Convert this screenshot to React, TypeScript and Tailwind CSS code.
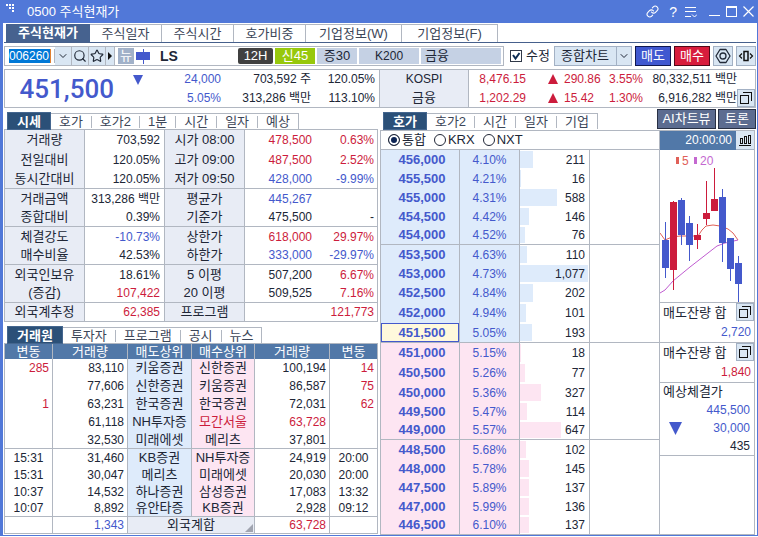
import clsx from 'clsx'
import { ChevronDown, Link, Search, Star } from 'lucide-react'
import React from 'react'

type Tone = 'up' | 'down' | 'flat'

const toneClass: Record<Tone, string> = {
  up: 'text-[#cc1c3c]',
  down: 'text-[#4459cc]',
  flat: 'text-[#202636]',
}

const mainTabs = ['주식일자', '주식시간', '호가비중', '기업정보(W)', '기업정보(F)']

type QuoteRow = {
  label: string
  value: string
  tone?: Tone
  label2: string
  value2: string
  rate?: string
  tone2: Tone
  rateTone?: Tone
  last?: boolean
  tall?: boolean
}

const quoteRows: QuoteRow[] = [
  { label: '거래량', value: '703,592', label2: '시가 08:00', value2: '478,500', rate: '0.63%', tone2: 'up', tall: true },
  { label: '전일대비', value: '120.05%', label2: '고가 09:00', value2: '487,500', rate: '2.52%', tone2: 'up' },
  { label: '동시간대비', value: '120.05%', label2: '저가 09:50', value2: '428,000', rate: '-9.99%', tone2: 'down', last: true, tall: true },
  { label: '거래금액', value: '313,286 백만', label2: '평균가', value2: '445,267', tone2: 'down' },
  { label: '종합대비', value: '0.39%', label2: '기준가', value2: '475,500', rate: '-', tone2: 'flat', last: true },
  { label: '체결강도', value: '-10.73%', tone: 'down', label2: '상한가', value2: '618,000', rate: '29.97%', tone2: 'up' },
  { label: '매수비율', value: '42.53%', label2: '하한가', value2: '333,000', rate: '-29.97%', tone2: 'down', last: true },
  { label: '외국인보유', value: '18.61%', label2: '5 이평', value2: '507,200', rate: '6.67%', tone2: 'flat', rateTone: 'up' },
  { label: '(증감)', value: '107,422', tone: 'up', label2: '20 이평', value2: '509,525', rate: '7.16%', tone2: 'flat', rateTone: 'up', last: true },
  { label: '외국계추정', value: '62,385', tone: 'up', label2: '프로그램', value2: '', rate: '121,773', tone2: 'up', last: true },
]

const topBrokers = [
  ['285', '83,110', '키움증권', '신한증권', '100,194', '14'],
  ['', '77,606', '신한증권', '키움증권', '86,587', '75'],
  ['1', '63,231', '한국증권', '한국증권', '72,031', '62'],
  ['', '61,118', 'NH투자증', '모간서울', '63,728', ''],
  ['', '32,530', '미래에셋', '메리츠', '37,801', ''],
]

const otherBrokers = [
  ['15:31', '31,460', 'KB증권', 'NH투자증', '24,919', '20:00'],
  ['15:31', '30,047', '메리츠', '미래에셋', '20,030', '20:00'],
  ['10:37', '14,532', '하나증권', '삼성증권', '17,083', '13:32'],
  ['10:07', '8,892', '유안타증', 'KB증권', '2,928', '09:12'],
]

type Level = { price: string; rate: string; qty: number; tall?: boolean }

const levels: Level[] = [
  { price: '456,000', rate: '4.10%', qty: 211 },
  { price: '455,500', rate: '4.21%', qty: 16 },
  { price: '455,000', rate: '4.31%', qty: 588 },
  { price: '454,500', rate: '4.42%', qty: 146 },
  { price: '454,000', rate: '4.52%', qty: 76 },
  { price: '453,500', rate: '4.63%', qty: 110 },
  { price: '453,000', rate: '4.73%', qty: 1077 },
  { price: '452,500', rate: '4.84%', qty: 202, tall: true },
  { price: '452,000', rate: '4.94%', qty: 101, tall: true },
  { price: '451,500', rate: '5.05%', qty: 193, tall: true },
  { price: '451,000', rate: '5.15%', qty: 18, tall: true },
  { price: '450,500', rate: '5.26%', qty: 77, tall: true },
  { price: '450,000', rate: '5.36%', qty: 327 },
  { price: '449,500', rate: '5.47%', qty: 114 },
  { price: '449,000', rate: '5.57%', qty: 647 },
  { price: '448,500', rate: '5.68%', qty: 102 },
  { price: '448,000', rate: '5.78%', qty: 145 },
  { price: '447,500', rate: '5.89%', qty: 137 },
  { price: '447,000', rate: '5.99%', qty: 136 },
  { price: '446,500', rate: '6.10%', qty: 137 },
]

// x, body top, body bottom, wick top, wick bottom, rising
const candles: [number, number, number, number, number, boolean][] = [
  [2, 90, 118, 72, 128, false],
  [10, 52, 120, 51, 140, true],
  [18, 50, 85, 48, 95, false],
  [26, 73, 95, 66, 111, false],
  [34, 85, 90, 74, 99, true],
  [43, 63, 69, 31, 75, true],
  [51, 49, 61, 18, 61, true],
  [59, 47, 93, 39, 112, false],
  [67, 88, 119, 88, 131, false],
  [75, 113, 134, 106, 152, false],
]

function Triangle({ up, className }: { up?: boolean; className?: string }) {
  return (
    <svg viewBox="0 0 10 10" className={className} fill="currentColor" aria-hidden="true">
      <path d={up ? 'M5 0L10 10H0Z' : 'M0 0H10L5 10Z'} />
    </svg>
  )
}

function PopupButton({ label }: { label: string }) {
  return (
    <button
      type="button"
      aria-label={label}
      className="flex size-[18px] shrink-0 items-center justify-center border border-[#a3b1c4] bg-[#d9e6f3]"
    >
      <svg viewBox="0 0 14 14" className="size-3.5 shrink-0" fill="none" stroke="#111" shapeRendering="crispEdges">
        <path d="M1.5 4.5h8v8h-8z" />
        <path d="M4 1.5h8.500V10" />
      </svg>
    </button>
  )
}

function SubTabs({ active, tabs }: { active: string; tabs: string[] }) {
  return (
    <nav className="flex h-[17px] pl-[3px]">
      <button
        type="button"
        className="-mb-px shrink-0 border border-[#44668f] bg-[#2b5078] px-[9px] leading-[15px] font-bold text-white"
      >
        {active}
      </button>
      <div className="mt-px flex items-center border-t border-r border-[#b1b7c1]">
        {tabs.map((tab, i) => (
          <React.Fragment key={tab}>
            {i > 0 && <span className="h-3 w-px bg-[#b1b7c1]" />}
            <button type="button" className="px-2 leading-[15px] whitespace-nowrap text-[#3c4658]">
              {tab}
            </button>
          </React.Fragment>
        ))}
      </div>
    </nav>
  )
}

function TitleBar() {
  return (
    <header className="flex h-[23px] items-center bg-[#5178d8] pr-[3px] pl-[3px] text-white">
      <svg viewBox="0 0 9 9" className="mb-1.5 size-[9px]" fill="#fff" shapeRendering="crispEdges" aria-hidden="true">
        <path d="M0 0h2v2H0zM3 0h2v2H3zM6 0h2v2H6zM3 3h2v2H3zM6 3h2v2H6zM6 6h2v2H6z" />
      </svg>
      <h1 className="ml-3 flex-1">0500 주식현재가</h1>
      <div className="flex items-center">
        <button type="button" aria-label="연결" className="mr-2.5">
          <Link className="size-[13px]" strokeWidth={2} />
        </button>
        <button type="button" aria-label="도움말" className="mr-2 text-sm leading-none">
          ?
        </button>
        <button type="button" aria-label="메뉴" className="mr-3">
          <svg viewBox="0 0 12 12" className="size-3" fill="none" stroke="#fff" shapeRendering="crispEdges">
            <path d="M0 1.5h11M0 5.5h11M0 10.5h6" />
            <path d="M7 8.500l2.500 2.500L12 8.500" shapeRendering="auto" />
          </svg>
        </button>
        <button type="button" aria-label="최소화" className="mr-1.5">
          <svg viewBox="0 0 11 12" className="h-3 w-[11px]" fill="#fff" shapeRendering="crispEdges">
            <path d="M0 9h11v1H0z" />
          </svg>
        </button>
        <button type="button" aria-label="최대화" className="mr-1.5">
          <svg viewBox="0 0 11 12" className="h-3 w-[11px]" fill="none" stroke="#fff" shapeRendering="crispEdges">
            <path d="M.5 .5h10v10H.5zM0 1.5h11" />
          </svg>
        </button>
        <button type="button" aria-label="닫기">
          <svg viewBox="0 0 11 12" className="h-3 w-[11px]" fill="none" stroke="#fff" strokeWidth="1.200">
            <path d="M.5 .5l10 10M10.500 .5l-10 10" />
          </svg>
        </button>
      </div>
    </header>
  )
}

function Toolbar() {
  const iconButton = 'flex h-full shrink-0 items-center justify-center border-r border-[#b1b7c1] bg-[#d9e6f3] text-[#222a38]'
  return (
    <div className="mt-[3px] flex h-5 items-stretch">
      <div className="flex min-w-0 flex-[501] items-center border border-[#b1b7c1]">
        <div className="w-[50px] shrink-0 border-r border-[#b1b7c1] pl-1">
          <input
            aria-label="종목코드"
            defaultValue="006260"
            className="block h-3.5 w-[42px] border-r border-[#e08030] bg-[#0078d7] text-xs leading-[14px] text-white outline-none"
          />
        </div>
        <button type="button" aria-label="종목 목록" className={clsx(iconButton, 'w-[17px]')}>
          <ChevronDown className="size-3" />
        </button>
        <button type="button" aria-label="검색" className={clsx(iconButton, 'w-[17px]')}>
          <Search className="size-3.5" />
        </button>
        <button type="button" aria-label="관심종목" className={clsx(iconButton, 'w-[17px]')}>
          <Star className="size-3.5" strokeWidth={2} />
        </button>
        <button type="button" aria-label="다음" className={clsx(iconButton, 'w-[9px]')}>
          <svg viewBox="0 0 4 8" className="h-2 w-1" fill="#111">
            <path d="M0 0l4 4-4 4z" />
          </svg>
        </button>
        <span className="ml-[3px] size-4 shrink-0 bg-[#a1b1c9] text-center leading-[15px] text-white">뉴</span>
        <svg viewBox="0 0 14 15" className="ml-0.5 h-[15px] w-3.5 shrink-0" fill="#4459cc" shapeRendering="crispEdges" aria-hidden="true">
          <path d="M0 3h14v8H0zM7 0h1v15H7z" />
        </svg>
        <strong className="ml-2.5 flex-1 text-sm leading-none text-[#202636]">LS</strong>
        <div className="flex shrink-0 gap-0.5 pr-0.5 leading-4 text-[#202636]">
          <span className="w-[35px] rounded-xs bg-[#404040] text-center text-white">12H</span>
          <span className="w-10 bg-[#97c80c] text-center text-white">신45</span>
          <span className="w-10 bg-[#c5d1e4] text-center">증30</span>
          <span className="w-[60px] bg-[#c5d1e4] text-center text-xs leading-4">K200</span>
          <span className="w-20 bg-[#c5d1e4] pl-1">금융</span>
        </div>
      </div>
      <label className="ml-1.5 flex items-center gap-1">
        <input
          type="checkbox"
          defaultChecked
          className="peer size-3 appearance-none border border-[#303848] bg-white"
        />
        <svg viewBox="0 0 12 12" className="pointer-events-none -ml-4 hidden size-3 peer-checked:block" fill="none" stroke="#0c2c54" strokeWidth="2">
          <path d="M3 5l2.500 3.500L9.500 3" />
        </svg>
        <span>수정</span>
      </label>
      <div className="relative ml-1 w-[78px]">
        <select
          aria-label="차트 종류"
          className="h-5 w-full appearance-none border border-[#a3b1c4] bg-[#d9e6f3] pl-1.5 leading-[18px] text-[#202636]"
        >
          <option>종합차트</option>
        </select>
        <span className="pointer-events-none absolute top-0 right-0 flex h-5 w-4 items-center justify-center border border-[#a3b1c4]">
          <ChevronDown className="size-3" />
        </span>
      </div>
      <button type="button" className="ml-[3px] w-9 border border-[#101850] bg-[#4058d0] leading-[18px] text-white">
        매도
      </button>
      <button type="button" className="ml-[3px] w-9 border border-[#500818] bg-[#d81c3c] leading-[18px] text-white">
        매수
      </button>
      <button type="button" aria-label="설정" className="ml-[3px] flex w-5 items-center justify-center border border-[#a3b1c4] bg-[#d9e6f3]">
        <svg viewBox="0 0 16 16" className="size-4" fill="none" stroke="#222a38" strokeWidth="1.300">
          <path d="M5 1.500H11L15 8 11 14.500H5L1 8z" strokeLinejoin="round" />
          <circle cx="8" cy="8" r="3" />
        </svg>
      </button>
      <button type="button" aria-label="좌우 이동" className="ml-[3px] flex w-5 items-center justify-center border border-[#a3b1c4] bg-[#d9e6f3]">
        <svg viewBox="0 0 16 16" className="size-4" fill="none" stroke="#111" strokeWidth="1.200">
          <path d="M6 3.500h4v9H6z" strokeWidth="1.500" />
          <path d="M4 5.500L1.500 8 4 10.500M12 5.500L14.500 8 12 10.500" />
        </svg>
      </button>
    </div>
  )
}

function PriceSummary() {
  const pair = 'grid grid-rows-2 items-center'
  return (
    <section className="mt-[3px] grid h-[39px] grid-cols-[115fr_30fr_71fr_90fr_68fr_90fr_57fr_38fr_39fr_40fr_94fr_18fr] border border-[#b1b7c1] text-xs leading-[18px] whitespace-nowrap">
      <strong className="self-center pr-1.5 text-right font-[Roboto] text-[26px] leading-none font-medium text-[#4459cc]">
        451,500
      </strong>
      <div className="pt-[5px] pl-[13px]">
        <Triangle className="size-2.5 text-[#4459cc]" />
      </div>
      <div className={clsx(pair, 'text-right text-[#4459cc]')}>
        <span>24,000</span>
        <span>5.05%</span>
      </div>
      <div className={clsx(pair, 'text-right')}>
        <span>703,592 주</span>
        <span>313,286 백만</span>
      </div>
      <div className={clsx(pair, 'pr-1 text-right')}>
        <span>120.05%</span>
        <span>113.10%</span>
      </div>
      <div className={clsx(pair, 'border-x border-[#b1b7c1] bg-[#e8ecf5] text-center')}>
        <span>KOSPI</span>
        <span className="text-[13px]">금융</span>
      </div>
      <div className={clsx(pair, 'text-right text-[#cc1c3c]')}>
        <span>8,476.15</span>
        <span>1,202.29</span>
      </div>
      <div className={clsx(pair, 'justify-end pr-1.5 text-[#cc1c3c]')}>
        <Triangle up className="size-2.5" />
        <Triangle up className="size-2.5" />
      </div>
      <div className={clsx(pair, 'text-[#cc1c3c]')}>
        <span>290.86</span>
        <span>15.42</span>
      </div>
      <div className={clsx(pair, 'text-right text-[#cc1c3c]')}>
        <span>3.55%</span>
        <span>1.30%</span>
      </div>
      <div className={clsx(pair, 'text-right')}>
        <span>80,332,511 백만</span>
        <span>6,916,282 백만</span>
      </div>
      <div className="flex items-end">
        <PopupButton label="지수 상세" />
      </div>
    </section>
  )
}

function QuoteTable() {
  const labelCell = 'border-r bg-[#e8ecf5] text-center text-[13px] font-normal'
  return (
    <table className="w-full table-fixed border-separate border-spacing-0 border-t border-l border-[#b1b7c1] text-xs leading-[18px] whitespace-nowrap">
      <colgroup>
        <col className="w-20" />
        <col className="w-20" />
        <col className="w-20" />
        <col className="w-[71px]" />
        <col className="w-[62px]" />
      </colgroup>
      <tbody>
        {quoteRows.map((row) => {
          const line = clsx('border-[#b1b7c1] p-0', row.last && 'border-b')
          return (
            <tr key={row.label} className={row.tall ? 'h-5' : 'h-[19px]'}>
              <th scope="row" className={clsx(line, labelCell)}>{row.label}</th>
              <td className={clsx(line, 'border-r pr-1 text-right', toneClass[row.tone ?? 'flat'])}>{row.value}</td>
              <th scope="row" className={clsx(line, labelCell)}>{row.label2}</th>
              <td className={clsx(line, 'pr-1 text-right', toneClass[row.tone2])}>{row.value2}</td>
              <td className={clsx(line, 'border-r pr-[3px] text-right', toneClass[row.rateTone ?? row.tone2])}>{row.rate}</td>
            </tr>
          )
        })}
      </tbody>
    </table>
  )
}

function BrokerTable() {
  const cell = 'border-r border-[#b1b7c1] p-0'
  return (
    <table className="w-full table-fixed border-separate border-spacing-0 border-t border-l border-[#b1b7c1] text-xs leading-4 whitespace-nowrap">
      <colgroup>
        <col className="w-12" />
        <col className="w-[75px]" />
        <col className="w-16" />
        <col className="w-[63px]" />
        <col className="w-[75px]" />
        <col className="w-12" />
      </colgroup>
      <thead>
        <tr className="h-[15px] bg-[#5178a8] text-[13px] leading-[14px] text-white">
          {['변동', '거래량', '매도상위', '매수상위', '거래량', '변동'].map((name, i) => (
            <th key={i} className={clsx(cell, 'font-normal')}>{name}</th>
          ))}
        </tr>
      </thead>
      <tbody>
        {topBrokers.map((row, i) => {
          const line = clsx(cell, i === topBrokers.length - 1 && 'border-b')
          const foreign = row[3] === '모간서울' && 'text-[#cc1c3c]'
          return (
            <tr key={i} className="h-[18px]">
              <td className={clsx(line, 'pr-[3px] text-right text-[#cc1c3c]')}>{row[0]}</td>
              <td className={clsx(line, 'pr-[3px] text-right')}>{row[1]}</td>
              <td className={clsx(line, 'bg-[#deebfb] text-center text-[13px]')}>{row[2]}</td>
              <td className={clsx(line, 'bg-[#fde5f2] text-center text-[13px]', foreign)}>{row[3]}</td>
              <td className={clsx(line, 'pr-[3px] text-right', foreign)}>{row[4]}</td>
              <td className={clsx(line, 'pr-[3px] text-right text-[#cc1c3c]')}>{row[5]}</td>
            </tr>
          )
        })}
        {otherBrokers.map((row, i) => {
          const line = clsx(cell, i === otherBrokers.length - 1 && 'border-b')
          return (
            <tr key={i} className="h-[17px]">
              <td className={clsx(line, 'text-center')}>{row[0]}</td>
              <td className={clsx(line, 'pr-[3px] text-right')}>{row[1]}</td>
              <td className={clsx(line, 'bg-[#deebfb] text-center text-[13px]')}>{row[2]}</td>
              <td className={clsx(line, 'bg-[#fde5f2] text-center text-[13px]')}>{row[3]}</td>
              <td className={clsx(line, 'pr-[3px] text-right')}>{row[4]}</td>
              <td className={clsx(line, 'text-center')}>{row[5]}</td>
            </tr>
          )
        })}
      </tbody>
      <tfoot>
        <tr className="h-[17px]">
          <td className={clsx(cell, 'border-b')} />
          <td className={clsx(cell, 'border-b pr-[3px] text-right text-[#4459cc]')}>1,343</td>
          <td colSpan={2} className={clsx(cell, 'relative border-b bg-[#e8ecf5] text-center text-[13px]')}>
            외국계합
            <svg viewBox="0 0 8 8" className="absolute right-px bottom-px size-2" fill="#a0a4b0" aria-hidden="true">
              <path d="M8 0v8H0z" />
            </svg>
          </td>
          <td className={clsx(cell, 'border-b pr-[3px] text-right text-[#cc1c3c]')}>63,728</td>
          <td className={clsx(cell, 'border-b')} />
        </tr>
      </tfoot>
    </table>
  )
}

function OrderBook() {
  return (
    <section className="min-w-0 border-t border-l border-[#b1b7c1]">
      <fieldset className="flex h-[19px] items-center gap-2 border-r border-b border-[#b1b7c1] pl-[7px]">
        {['통합', 'KRX', 'NXT'].map((market, i) => (
          <label key={market} className="flex items-center gap-0.5 leading-[18px]">
            <input
              type="radio"
              name="market"
              defaultChecked={i === 0}
              className="size-3 appearance-none rounded-full border border-[#202636] bg-white checked:bg-[#0c2454] checked:shadow-[inset_0_0_0_2px_#fff]"
            />
            {market}
          </label>
        ))}
      </fieldset>
      <table className="w-full table-fixed border-separate border-spacing-0 text-xs leading-[18px]">
        <colgroup>
          <col className="w-[79px]" />
          <col className="w-[60px]" />
          <col className="w-[70px]" />
          <col className="w-[70px]" />
        </colgroup>
        <tbody>
          {levels.map((level, i) => {
            const ask = i < 10
            const line = clsx('border-r border-[#b1b7c1] p-0', i % 5 === 4 && 'border-b')
            const side = ask ? 'bg-[#deebfb]' : 'bg-[#fde5f2]'
            const current = level.price === '451,500'
            return (
              <tr key={level.price} className={level.tall ? 'h-5' : 'h-[19px]'}>
                <td
                  className={clsx(
                    line,
                    'pl-1 text-center text-[13px] font-bold text-[#4459cc]',
                    current ? 'bg-[#fff9dc] shadow-[inset_0_0_0_1px_#4459cc]' : side,
                  )}
                >
                  {level.price}
                </td>
                <td className={clsx(line, side, 'text-center text-[#4459cc]')}>{level.rate}</td>
                <td className={clsx(line, 'relative pr-1 text-right')}>
                  <span className={clsx('absolute inset-y-px left-0', side)} style={{ width: `${level.qty / 10.9}%` }} />
                  <span className="relative">{level.qty.toLocaleString('en-US')}</span>
                </td>
                <td className={line} />
              </tr>
            )
          })}
        </tbody>
      </table>
    </section>
  )
}

function MiniChart() {
  return (
    <svg viewBox="0 0 94 152" className="h-[152px] w-full" role="img" aria-label="주가 차트">
      <rect x="16" y="7" width="3" height="7" fill="#e06058" />
      <text x="22" y="15" fontSize="12" fill="#e06058">5</text>
      <rect x="34" y="7" width="3" height="7" fill="#c468d0" />
      <text x="40" y="15" fontSize="12" fill="#c468d0">20</text>
      <polyline points="0,83 5,90 12,87 20,86 38,86 42,80 46,76 53,75 60,76 68,79 73,83 78,90" fill="none" stroke="#e06058" />
      <polyline points="0,143 5,140 13,131 30,117 57,96 65,93 78,90" fill="none" stroke="#c05cd0" />
      <g shapeRendering="crispEdges">
        {candles.map(([x, top, bottom, high, low, rising]) => (
          <g key={x} fill={rising ? '#cc1c3c' : '#4459cc'}>
            <rect x={x} y={top} width="7" height={bottom - top} />
            <rect x={x + 3} y={high} width="1" height={low - high} />
          </g>
        ))}
      </g>
    </svg>
  )
}

function SidePanel() {
  return (
    <aside className="mr-px flex min-w-0 flex-col border-y border-r border-[#b1b7c1]">
      <div className="flex h-[19px]">
        <time className="flex-1 bg-[#5178a8] pr-1 text-right text-xs leading-[19px] text-white">20:00:00</time>
        <button type="button" aria-label="차트 설정" className="flex w-[18px] items-center justify-center border-b border-[#a3b1c4] bg-[#d9e6f3]">
          <svg viewBox="0 0 12 13" className="h-[13px] w-3" fill="none" stroke="#111" shapeRendering="crispEdges">
            <path d="M1.500 4.500h2v5h-2zM5.500 2.500h2v7h-2zM9.500 1.500h2v8h-2zM0 11.500h12" />
          </svg>
        </button>
      </div>
      <MiniChart />
      {[
        { name: '매도잔량 합', value: '2,720', tone: 'down' as Tone },
        { name: '매수잔량 합', value: '1,840', tone: 'up' as Tone },
      ].map((item) => (
        <dl key={item.name} className="h-10 border-t border-[#b1b7c1]">
          <dt className="flex justify-between pl-[3px] leading-5">
            {item.name}
            <PopupButton label={item.name} />
          </dt>
          <dd className={clsx('pr-[3px] text-right text-xs leading-[18px]', toneClass[item.tone])}>{item.value}</dd>
        </dl>
      ))}
      <dl className="border-y border-[#b1b7c1] text-right text-xs leading-[18px]">
        <dt className="pl-[3px] text-left text-[13px]">예상체결가</dt>
        <dd className="pr-1 text-[#4459cc]">445,500</dd>
        <dd className="flex items-center justify-between pr-1 pl-[9px] text-[#4459cc]">
          <Triangle className="size-[13px]" />
          30,000
        </dd>
        <dd className="pr-1">435</dd>
      </dl>
    </aside>
  )
}

export default function App() {
  return (
    <div className="w-full border-r border-b border-l-[3px] border-[#5178d8] bg-white font-['Liberation_Sans','Noto_Sans_CJK_KR',sans-serif] text-[13px] leading-[18px] text-[#202636]">
      <TitleBar />
      <main className="px-px">
        <nav className="flex h-5 border-b border-[#46608c] pt-px pl-0.5 text-[#3c4658]">
          <button type="button" className="w-[84px] bg-[#46628f] font-bold text-white">
            주식현재가
          </button>
          {mainTabs.map((tab, i) => (
            <button
              key={tab}
              type="button"
              className={clsx('border-t border-r border-[#b1b7c1]', i < 3 ? 'w-[72px]' : 'w-24')}
            >
              {tab}
            </button>
          ))}
        </nav>
        <Toolbar />
        <PriceSummary />
        <div className="mt-px grid grid-cols-[374fr_376fr] gap-0.5">
          <div className="min-w-0 pt-[3px]">
            <SubTabs active="시세" tabs={['호가', '호가2', '1분', '시간', '일자', '예상']} />
            <QuoteTable />
            <div className="pt-1">
              <SubTabs active="거래원" tabs={['투자자', '프로그램', '공시', '뉴스']} />
            </div>
            <BrokerTable />
          </div>
          <div className="min-w-0">
            <div className="flex h-[21px] justify-between">
              <div className="pt-[3px]">
                <SubTabs active="호가" tabs={['호가2', '시간', '일자', '기업']} />
              </div>
              <div className="mb-px flex gap-0.5 text-white">
                <button type="button" className="w-[59px] border border-[#283044] bg-[#5c6c90]">AI차트뷰</button>
                <button type="button" className="w-[38px] border border-[#283044] bg-[#5c6c90]">토론</button>
              </div>
            </div>
            <div className="grid grid-cols-[280fr_96fr]">
              <OrderBook />
              <SidePanel />
            </div>
          </div>
        </div>
      </main>
    </div>
  )
}
